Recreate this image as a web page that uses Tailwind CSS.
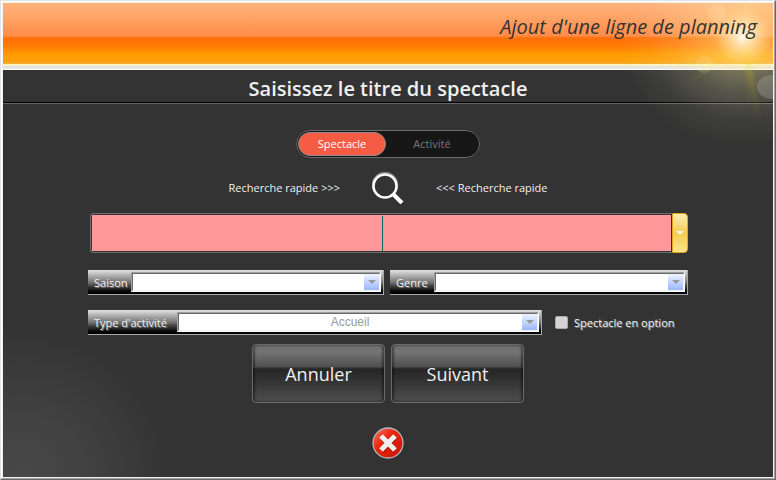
<!DOCTYPE html>
<html lang="fr">
<head>
    <meta charset="UTF-8">
    <meta name="viewport" content="width=device-width, initial-scale=1.0">
    <title>Ajout d'une ligne de planning</title>
    <script src="https://cdn.jsdelivr.net/npm/@tailwindcss/browser@4"></script>
</head>
<body class="min-h-screen flex bg-[#333] font-['Trebuchet_MS','Open_Sans',sans-serif] text-[11px] leading-4 text-[#f0f0f0]">
    <!-- window frame -->
    <div class="flex flex-1 border border-t-[#e3e3e3] border-l-[#e3e3e3] border-r-[#696969] border-b-[#696969]">
    <div class="flex flex-1 border border-t-white border-l-white border-r-[#a0a0a0] border-b-[#a0a0a0]">
    <div class="relative flex flex-col flex-1 overflow-hidden border border-[#f0f0f0] bg-[radial-gradient(circle_at_20px_100%,#484848_0px,#424242_60px,#333_150px)]">

        <header class="h-[61px] px-4 pt-2.5 text-right bg-[linear-gradient(#ffb27c_0px,#ff9c5e_20px,#ff8c48_33px,#ff6f08_35px,#ff7c05_43px,#ff9c00_52px,#ffa010_59px,#e8b038_61px)]">
            <h1 class="relative z-10 text-[20px] leading-7 italic text-[#333]">Ajout d'une ligne de planning</h1>
        </header>
        <div class="h-1.5 bg-[linear-gradient(#fbf3c4_2px,#e0e0e0_2px,#e8e8e8_5px,#fff_5px)]"></div>
        <h2 class="h-[34px] border-b border-[#666] shadow-[inset_0_-1px_0_#000] text-center text-[20px] leading-[38px] font-semibold">Saisissez le titre du spectacle</h2>

        <!-- lens flare -->
        <svg class="absolute top-0 right-0 pointer-events-none" width="300" height="160" viewBox="0 0 300 160">
            <defs>
                <radialGradient id="halo">
                    <stop offset="0" stop-color="#fff3a0" stop-opacity=".6"/>
                    <stop offset=".3" stop-color="#fff0a0" stop-opacity=".34"/>
                    <stop offset=".5" stop-color="#f8f0b0" stop-opacity=".19"/>
                    <stop offset=".75" stop-color="#f4f0c0" stop-opacity=".06"/>
                    <stop offset="1" stop-color="#f4f0c0" stop-opacity="0"/>
                </radialGradient>
                <radialGradient id="sun">
                    <stop offset="0" stop-color="#fff" stop-opacity=".95"/>
                    <stop offset=".3" stop-color="#fff4e0" stop-opacity=".65"/>
                    <stop offset="1" stop-color="#ffe8a0" stop-opacity="0"/>
                </radialGradient>
                <linearGradient id="ray" x1="0" y1="0" x2="0" y2="1">
                    <stop offset="0" stop-color="#e8e000" stop-opacity=".03"/>
                    <stop offset=".45" stop-color="#e0d800" stop-opacity=".12"/>
                    <stop offset="1" stop-color="#c8c000" stop-opacity="0"/>
                </linearGradient>
                <filter id="soft"><feGaussianBlur stdDeviation="1"/></filter>
            </defs>
            <ellipse cx="270" cy="34" rx="125" ry="110" fill="url(#halo)"/>
            <circle cx="270" cy="34" r="28" fill="url(#sun)"/>
            <g filter="url(#soft)">
                <g fill="#ffe9a0" opacity=".15">
                    <path d="M268 34 L236 0 L272 31Z"/>
                    <path d="M268 34 L272 0 L276 0 L273 34Z"/>
                    <path d="M270 31 L300 14 L272 36Z"/>
                    <path d="M270 36 L300 46 L272 32Z"/>
                </g>
                <path d="M269 34 L274 104 L282 104 L273 34Z" fill="url(#ray)"/>
                <path d="M270 34 L284 122 L290 122 L274 34Z" fill="url(#ray)"/>
                <path d="M268 34 L206 84 L214 88 L272 36Z" fill="url(#ray)" opacity=".5"/>
            </g>
            <circle cx="244" cy="10" r="9" fill="#fff" opacity=".12"/>
            <circle cx="231" cy="61" r="9" fill="#fff6c0" opacity=".15"/>
            <circle cx="218" cy="58" r="5" fill="#ffe070" opacity=".1"/>
            <ellipse cx="299" cy="84" rx="15" ry="12" fill="#e8e8e0" opacity=".2"/>
        </svg>

        <form class="w-full max-w-[600px] mx-auto pt-[26px] flex flex-col items-center">
            <fieldset class="w-[184px] h-7 p-px flex rounded-full border border-[#6b6b6b] bg-[#171717] text-center leading-[22px]">
                <label class="w-[88px] border border-transparent rounded-full text-[#777] has-checked:bg-[#f65c44] has-checked:border-[#8c8c8c] has-checked:text-white">
                    <input type="radio" name="mode" class="sr-only" checked>Spectacle
                </label>
                <label class="flex-1 border border-transparent rounded-full text-[#777] has-checked:bg-[#f65c44] has-checked:border-[#8c8c8c] has-checked:text-white">
                    <input type="radio" name="mode" class="sr-only">Activité
                </label>
            </fieldset>

            <div class="mt-3.5 flex items-center justify-center gap-8">
                <span>Recherche rapide &gt;&gt;&gt;</span>
                <button type="button" aria-label="Rechercher">
                    <svg class="block" width="32" height="32" viewBox="0 0 32 32" fill="none">
                        <circle cx="13" cy="13" r="12.5" stroke="#888" stroke-width="1.5"/>
                        <circle cx="13" cy="14" r="11.5" stroke="#fff" stroke-width="2.4"/>
                        <path d="M20.5 21.5 L30 31" stroke="#fff" stroke-width="4"/>
                    </svg>
                </button>
                <span>&lt;&lt;&lt; Recherche rapide</span>
            </div>

            <div class="w-full mt-[9px] pl-0.5 flex">
                <div class="relative flex-1 h-10 rounded-l-sm border border-r-0 border-[#6e6e6e] bg-[#333] p-px">
                    <input type="text" aria-label="Titre du spectacle" class="block w-full h-full bg-[#ff9999] text-center text-[20px] text-[#333] outline-none">
                    <span class="absolute left-1/2 top-0.5 bottom-px w-px bg-[#006b66]"></span>
                </div>
                <button type="button" aria-label="Liste des titres" class="w-4 h-10 flex items-center justify-center rounded-r-sm border border-[#e9a41c] bg-linear-to-b from-[#fdeeb0] via-[#f5cc4c] to-[#fae48c]">
                    <svg width="8" height="4" viewBox="0 0 8 4"><path d="M0 0H8L4 4Z" fill="#f2f2f2"/></svg>
                </button>
            </div>

            <div class="w-full mt-[17px] flex gap-1.5 [text-shadow:1px_1px_0_#777]">
                <div class="w-[296px] h-[25px] pt-0.5 pr-0.5 pl-1.5 flex border-r border-b border-[#a8a8a8] bg-linear-to-b from-[#e4e4e4] via-[#777] to-black">
                    <label for="saison" class="w-[37px] leading-[22px]">Saison</label>
                    <div class="relative flex-1 h-5 border border-t-[#a0a0a0] border-l-[#a0a0a0] border-white">
                        <select id="saison" class="block appearance-none w-full h-full bg-white border border-t-[#696969] border-l-[#696969] border-[#f0f0f0]"><option></option></select>
                        <span class="absolute top-px right-px bottom-px w-[15px] flex items-center justify-center bg-linear-to-b from-[#f0f4ff] to-[#9cb6fc] pointer-events-none">
                            <svg width="8" height="4" viewBox="0 0 8 4"><path d="M0 0H8L4 4Z" fill="#999"/></svg>
                        </span>
                    </div>
                </div>
                <div class="flex-1 h-[25px] pt-0.5 pr-0.5 pl-1.5 flex border-r border-b border-[#a8a8a8] bg-linear-to-b from-[#e4e4e4] via-[#777] to-black">
                    <label for="genre" class="w-[38px] leading-[22px]">Genre</label>
                    <div class="relative flex-1 h-5 border border-t-[#a0a0a0] border-l-[#a0a0a0] border-white">
                        <select id="genre" class="block appearance-none w-full h-full bg-white border border-t-[#696969] border-l-[#696969] border-[#f0f0f0]"><option></option></select>
                        <span class="absolute top-px right-px bottom-px w-[15px] flex items-center justify-center bg-linear-to-b from-[#f0f4ff] to-[#9cb6fc] pointer-events-none">
                            <svg width="8" height="4" viewBox="0 0 8 4"><path d="M0 0H8L4 4Z" fill="#999"/></svg>
                        </span>
                    </div>
                </div>
            </div>

            <div class="w-full mt-[15px] flex items-center [text-shadow:1px_1px_0_#777]">
                <div class="flex-1 h-[25px] pt-0.5 pr-0.5 pl-1.5 flex border-r border-b border-[#a8a8a8] bg-linear-to-b from-[#e4e4e4] via-[#777] to-black">
                    <label for="type" class="w-[83px] leading-[22px]">Type d'activité</label>
                    <div class="relative flex-1 h-5 border border-t-[#a0a0a0] border-l-[#a0a0a0] border-white">
                        <select id="type" class="block appearance-none w-full h-full pr-4 bg-white border border-t-[#696969] border-l-[#696969] border-[#f0f0f0] font-['Liberation_Sans',sans-serif] text-[12px] leading-4 text-[#999] [text-align-last:center] [text-shadow:none]"><option>Accueil</option></select>
                        <span class="absolute top-px right-px bottom-px w-[15px] flex items-center justify-center bg-linear-to-b from-[#f0f4ff] to-[#9cb6fc] pointer-events-none">
                            <svg width="8" height="4" viewBox="0 0 8 4"><path d="M0 0H8L4 4Z" fill="#999"/></svg>
                        </span>
                    </div>
                </div>
                <label class="w-[146px] pl-[13px] flex items-center gap-1.5 whitespace-nowrap">
                    <input type="checkbox" class="appearance-none size-[13px] shrink-0 rounded-xs border border-[#aaa] bg-[#d4d4d4] checked:bg-[#f65c44]">
                    Spectacle en option
                </label>
            </div>

            <div class="mt-[9px] flex gap-1.5 text-[18px]">
                <button type="button" class="w-[133px] h-[59px] rounded-sm border border-[#6a6a6a] shadow-[inset_2px_0_2px_#0006,inset_-2px_0_2px_#0006] bg-[linear-gradient(#6c6c6c_0%,#747474_12%,#505050_38%,#262626_42%,#2a2a2a_50%,#4e4e4e_100%)]">Annuler</button>
                <button type="submit" class="w-[133px] h-[59px] rounded-sm border border-[#6a6a6a] shadow-[inset_2px_0_2px_#0006,inset_-2px_0_2px_#0006] bg-[linear-gradient(#6c6c6c_0%,#747474_12%,#505050_38%,#262626_42%,#2a2a2a_50%,#4e4e4e_100%)]">Suivant</button>
            </div>

            <button type="button" aria-label="Fermer" class="mt-6">
                <svg class="block" width="32" height="32" viewBox="0 0 32 32">
                    <defs>
                        <linearGradient id="red" x1="0" y1="0" x2="1" y2="1">
                            <stop offset="0" stop-color="#f47c6c"/>
                            <stop offset=".4" stop-color="#e8240c"/>
                            <stop offset="1" stop-color="#c81400"/>
                        </linearGradient>
                    </defs>
                    <circle cx="16" cy="16" r="15" fill="url(#red)" stroke="#b4b8c0" stroke-width="1.3"/>
                    <path d="M10 11 L23 24 M23 11 L10 24" stroke="#801000" stroke-opacity=".5" stroke-width="5"/>
                    <path d="M9 9 L23 23 M23 9 L9 23" stroke="#eee" stroke-width="5"/>
                </svg>
            </button>
        </form>
    </div>
    </div>
    </div>
</body>
</html>
